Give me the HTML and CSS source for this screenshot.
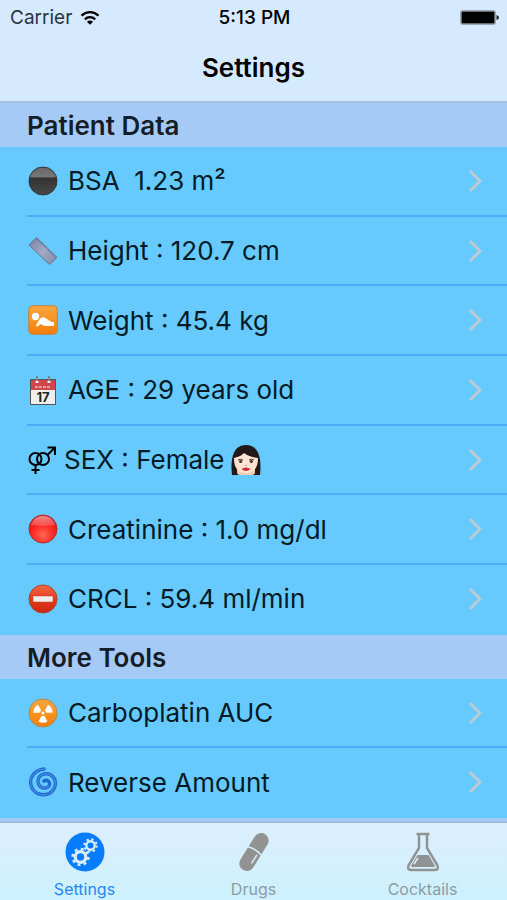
FILE: index.html
```html
<!DOCTYPE html>
<html lang="en">
  <head>
    <meta charset="UTF-8" />
    <meta name="viewport" content="width=device-width, initial-scale=1.0" />
    <title>Settings</title>
    <link rel="stylesheet" href="styles.css">
  </head>
  <body>
    <header class="navbar">
      <div class="status">
        <div class="carrier">
          <span>Carrier</span>
          <svg class="wifi" viewBox="0 0 20 16" fill="none" stroke="#000" stroke-width="2.4">
            <path d="M1.5 5.6C6.5 .9 13.500 .9 18.500 5.600" />
            <path d="M4.800 9.300C7.900 6.500 12.100 6.500 15.200 9.300" />
            <path d="M10 14.800L6.900 11.700Q10 9.300 13.100 11.700Z" fill="#000" stroke="none" />
          </svg>
        </div>
        <span class="time">5:13 PM</span>
        <svg class="battery" viewBox="0 0 39 16">
          <rect x="1" y="1" width="34" height="13" rx="1.500" fill="#000" stroke="#87919a" stroke-width="1.500" />
          <path d="M36.500 5Q39 5.500 39 7.500T36.500 10Z" fill="#222" />
        </svg>
      </div>
      <h1>Settings</h1>
    </header>

    <main>
      <section class="group patient">
        <h2>Patient Data</h2>
        <ul>
          <li>
            <a class="row" href="#bsa">
              <svg class="icon" viewBox="0 0 30 30">
                <defs>
                  <linearGradient id="black" x2="0" y2="1">
                    <stop offset="0" stop-color="#666" />
                    <stop offset=".34" stop-color="#777" />
                    <stop offset=".4" stop-color="#333" />
                    <stop offset="1" stop-color="#484848" />
                  </linearGradient>
                </defs>
                <circle cx="15" cy="15" r="14" fill="url(#black)" stroke="#333" />
              </svg>
              <span class="label">BSA&nbsp; 1.23 m²</span>
              <svg class="chevron" viewBox="0 0 14 24"><path d="M2 2l10 10L2 22" /></svg>
            </a>
          </li>
          <li>
            <a class="row" href="#height">
              <svg class="icon" viewBox="0 0 30 30">
                <defs>
                  <linearGradient id="steel" x2="1" y2="1">
                    <stop offset="0" stop-color="#777f9b" />
                    <stop offset=".5" stop-color="#a2abc5" />
                    <stop offset="1" stop-color="#7f88a6" />
                  </linearGradient>
                </defs>
                <path d="M8.500 1.500L29 21.500 21.500 28.500 1 9Z" fill="url(#steel)" stroke="#69718c" />
                <path d="M9 3L28 21.500" stroke="#737c98" stroke-width="2" stroke-dasharray="1 1" />
              </svg>
              <span class="label">Height : 120.7 cm</span>
              <svg class="chevron" viewBox="0 0 14 24"><path d="M2 2l10 10L2 22" /></svg>
            </a>
          </li>
          <li>
            <a class="row" href="#weight">
              <svg class="icon" viewBox="0 0 30 30">
                <defs>
                  <linearGradient id="orange" x2="0" y2="1">
                    <stop offset="0" stop-color="#f5a544" />
                    <stop offset=".5" stop-color="#fa9420" />
                    <stop offset="1" stop-color="#f47c0c" />
                  </linearGradient>
                </defs>
                <rect x=".7" y=".7" width="28.600" height="28.600" rx="4" fill="url(#orange)" stroke="#b98548" />
                <circle cx="7.500" cy="11.500" r="3.700" fill="#fff" />
                <path d="M8 20l3.500-5.500q2-2.800 5-2l7 4.500h2q1.700 1.800 0 4h-9l-3.500-2-3 2.200Q8 22 8 20Z" fill="#fff" />
              </svg>
              <span class="label">Weight : 45.4 kg</span>
              <svg class="chevron" viewBox="0 0 14 24"><path d="M2 2l10 10L2 22" /></svg>
            </a>
          </li>
          <li>
            <a class="row" href="#age">
              <svg class="icon" viewBox="0 0 30 30">
                <rect x="2.500" y="4.500" width="25" height="25" fill="#eee" stroke="#555" />
                <path d="M3 5h24v10H3z" fill="#cf464d" />
                <path d="M7 12h15" stroke="#e59b96" stroke-width="2" stroke-dasharray="3 1" />
                <path d="M9 7V1M21 7V1" stroke="#7d8792" stroke-width="2" />
                <path d="M9 6v2M21 6v2" stroke="#eee" stroke-width="3" />
                <text x="15" y="27" text-anchor="middle" class="date">17</text>
              </svg>
              <span class="label">AGE : 29 years old</span>
              <svg class="chevron" viewBox="0 0 14 24"><path d="M2 2l10 10L2 22" /></svg>
            </a>
          </li>
          <li>
            <a class="row sex" href="#sex">
              <svg class="icon" viewBox="0 0 30 30" fill="none" stroke="#000" stroke-width="2">
                <circle cx="7.500" cy="14" r="6" />
                <circle cx="15" cy="14" r="6" />
                <path d="M7.500 20v9M3.500 25h8M19.500 10l7.500-7.500M19.500 2.500H27V10" />
              </svg>
              <span class="label">SEX : Female</span>
              <svg class="woman" viewBox="0 0 32 32">
                <path d="M2 31C1 22 0 1 16 1s15 21 14 30Z" fill="#21191b" />
                <path d="M7 20h18v8q0 3-3 3H10q-3 0-3-3Z" fill="#efcdb2" />
                <path d="M4 14C9 13 12 11 14 9c4 3 8 4 14 5q0 15-12 15T4 14Z" fill="#ffe3d0" />
                <path d="M8 16q2.500-1.500 5 0M19 16q2.500-1.500 5 0" fill="none" stroke="#4c3932" />
                <circle cx="10.700" cy="17.500" r="1.600" fill="#41342e" />
                <circle cx="21.300" cy="17.500" r="1.600" fill="#41342e" />
                <path d="M15 21.500h2" stroke="#d9a68c" />
                <path d="M11.500 25q4.500-3 9 0-4.500 4-9 0Z" fill="#ce2732" />
              </svg>
              <svg class="chevron" viewBox="0 0 14 24"><path d="M2 2l10 10L2 22" /></svg>
            </a>
          </li>
          <li>
            <a class="row" href="#creatinine">
              <svg class="icon" viewBox="0 0 30 30">
                <defs>
                  <radialGradient id="red" cy=".72" r=".7">
                    <stop offset="0" stop-color="#ff6653" />
                    <stop offset=".6" stop-color="#fb2421" />
                    <stop offset="1" stop-color="#d91318" />
                  </radialGradient>
                  <linearGradient id="shine" x2="0" y2="1">
                    <stop offset="0" stop-color="#fff" stop-opacity=".5" />
                    <stop offset="1" stop-color="#fff" stop-opacity=".15" />
                  </linearGradient>
                </defs>
                <circle cx="15" cy="15" r="14" fill="url(#red)" stroke="#b12b31" />
                <path d="M3 11Q6 2 15 2t12 9Q15 13 3 11Z" fill="url(#shine)" />
              </svg>
              <span class="label">Creatinine : 1.0 mg/dl</span>
              <svg class="chevron" viewBox="0 0 14 24"><path d="M2 2l10 10L2 22" /></svg>
            </a>
          </li>
          <li>
            <a class="row" href="#crcl">
              <svg class="icon" viewBox="0 0 30 30">
                <defs>
                  <linearGradient id="stop" x2="0" y2="1">
                    <stop offset="0" stop-color="#f26a44" />
                    <stop offset=".5" stop-color="#e63c1d" />
                    <stop offset="1" stop-color="#c92610" />
                  </linearGradient>
                </defs>
                <circle cx="15" cy="15" r="14" fill="url(#stop)" stroke="#b2422e" />
                <path d="M5 12h20v6H5z" fill="#f1eeee" stroke="#c43a22" stroke-width=".5" />
              </svg>
              <span class="label">CRCL : 59.4 ml/min</span>
              <svg class="chevron" viewBox="0 0 14 24"><path d="M2 2l10 10L2 22" /></svg>
            </a>
          </li>
        </ul>
      </section>

      <section class="group tools">
        <h2>More Tools</h2>
        <ul>
          <li>
            <a class="row" href="#carboplatin">
              <svg class="icon" viewBox="0 0 30 30">
                <circle cx="15" cy="15" r="14" fill="url(#orange)" stroke="#b98548" />
                <g fill="#fff">
                  <circle cx="15" cy="15" r="1.600" />
                  <path id="blade" d="M13.500 18h3l3 5.500q-4.500 2.500-9 0Z" />
                  <use href="#blade" transform="rotate(120 15 15)" />
                  <use href="#blade" transform="rotate(240 15 15)" />
                </g>
              </svg>
              <span class="label">Carboplatin AUC</span>
              <svg class="chevron" viewBox="0 0 14 24"><path d="M2 2l10 10L2 22" /></svg>
            </a>
          </li>
          <li>
            <a class="row" href="#reverse">
              <svg class="icon" viewBox="0 0 30 30" fill="none" stroke-linecap="round">
                <path d="M16 2C7 3 1 10 3 18c2 9 12 12 19 8 7-5 7-14 1-18-6-3-13 0-13 6 0 7 8 9 11 5 2-4-2-7-5-5" stroke="#1f68cf" stroke-width="3.400" />
                <path d="M16 2C7 3 1 10 3 18c2 9 12 12 19 8 7-5 7-14 1-18-6-3-13 0-13 6 0 7 8 9 11 5" stroke="#3f86e4" stroke-width="1.400" />
              </svg>
              <span class="label">Reverse Amount</span>
              <svg class="chevron" viewBox="0 0 14 24"><path d="M2 2l10 10L2 22" /></svg>
            </a>
          </li>
        </ul>
      </section>
    </main>

    <nav class="tabs">
      <a class="tab active" href="#settings">
        <svg viewBox="0 0 40 40">
          <circle cx="20" cy="20" r="19.500" fill="#087cff" />
          <g fill="none" stroke="#d9edfc">
            <circle cx="15.500" cy="25" r="5.300" stroke-width="3.200" />
            <circle cx="15.500" cy="25" r="7.900" stroke-width="2.600" stroke-dasharray="2.900 3.305" />
            <circle cx="25.500" cy="13.500" r="4.200" stroke-width="2.400" />
            <circle cx="25.500" cy="13.500" r="6.200" stroke-width="2" stroke-dasharray="2.300 2.570" />
          </g>
        </svg>
        <span>Settings</span>
      </a>
      <a class="tab" href="#drugs">
        <svg viewBox="0 0 40 40">
          <g transform="rotate(32 20 20)" fill="#929292">
            <path d="M12.500 18V6.500a7.500 7.500 0 0 1 15 0V18Q20 15.500 12.500 18Z" />
            <path d="M12.500 19.500q7.500-2.500 15 0v14a7.500 7.500 0 0 1-15 0Z" />
            <path d="M24 21v10" stroke="#d9effc" stroke-width="1.500" />
          </g>
        </svg>
        <span>Drugs</span>
      </a>
      <a class="tab" href="#cocktails">
        <svg viewBox="0 0 40 40">
          <path d="M13.500 2h13M16 3v13L5.500 33.500Q4 38 8 38h24q4 0 2.500-4.500L24 16V3" fill="none" stroke="#929292" stroke-width="2.500" />
          <path d="M14.500 23h11l6 10q1 2-1 2h-21q-2 0-1-2Z" fill="#929292" />
          <path d="M15 26l-4 6" stroke="#d9effc" stroke-width="1.500" />
        </svg>
        <span>Cocktails</span>
      </a>
    </nav>
  </body>
</html>
```
FILE: styles.css
```css
* {
  box-sizing: border-box;
}
body {
  margin: 0;
  min-height: 100vh;
  display: flex;
  flex-direction: column;
  background: #a6caf6;
  color: #041a25;
  font-family: Inter, "Liberation Sans", sans-serif;
}
h1,
h2,
ul {
  margin: 0;
  padding: 0;
}
ul {
  list-style: none;
}
a {
  color: inherit;
  text-decoration: none;
}
svg {
  display: block;
  flex: none;
}

/* top bar */
.navbar {
  background: #d6eaff;
  border-bottom: 2px solid #a5bfdf;
  color: #000;
}
.status {
  display: grid;
  grid-template-columns: 1fr auto 1fr;
  align-items: center;
  height: 35px;
  padding: 0 8px 0 10px;
  font-size: 19px;
}
.carrier {
  display: flex;
  align-items: center;
  gap: 8px;
  color: #2a343d;
}
.wifi {
  width: 20px;
  height: 16px;
}
.time {
  font-weight: 500;
}
.battery {
  width: 39px;
  height: 16px;
  justify-self: end;
}
h1 {
  height: 66px;
  line-height: 66px;
  text-align: center;
  font-size: 26px;
  font-weight: 600;
}

/* lists */
main {
  flex: 1;
  display: flex;
  flex-direction: column;
  padding-bottom: 3px;
}
.group {
  display: flex;
  flex-direction: column;
}
.patient {
  flex: 7 0 auto;
}
.tools {
  flex: 2 0 auto;
}
h2 {
  height: 44px;
  padding-left: 27px;
  line-height: 46px;
  font-size: 26px;
  font-weight: 600;
  color: #151d27;
}
.group ul {
  flex: 1;
  display: flex;
  flex-direction: column;
  background: #66caff;
}
.group li {
  flex: 1 0 68px;
  display: flex;
  margin-left: 27px;
  border-bottom: 2px solid #4cadf8;
}
.group li:last-child {
  border-color: transparent;
}
.row {
  flex: 1;
  display: flex;
  align-items: center;
  gap: 10px;
  padding: 0 25px 0 1px;
  font-size: 26px;
}
.icon {
  width: 30px;
  height: 30px;
}
.date {
  font-size: 13px;
  font-weight: 700;
  fill: #222;
}
.sex {
  gap: 6px;
}
.woman {
  width: 32px;
  height: 32px;
}
.chevron {
  width: 14px;
  height: 24px;
  margin-left: auto;
  fill: none;
  stroke: #bccad3;
  stroke-width: 3;
}

/* bottom tabs */
.tabs {
  display: flex;
  height: 79px;
  border-top: 2px solid #9fbbdc;
  background: linear-gradient(#dceefd, #cdf1fe);
}
.tab {
  flex: 1;
  display: flex;
  flex-direction: column;
  align-items: center;
  padding-top: 9px;
  gap: 5px;
  font-size: 16px;
  line-height: 24px;
  color: #8d9ba3;
}
.tab svg {
  width: 40px;
  height: 40px;
}
.tab.active {
  color: #2589f5;
}
```
